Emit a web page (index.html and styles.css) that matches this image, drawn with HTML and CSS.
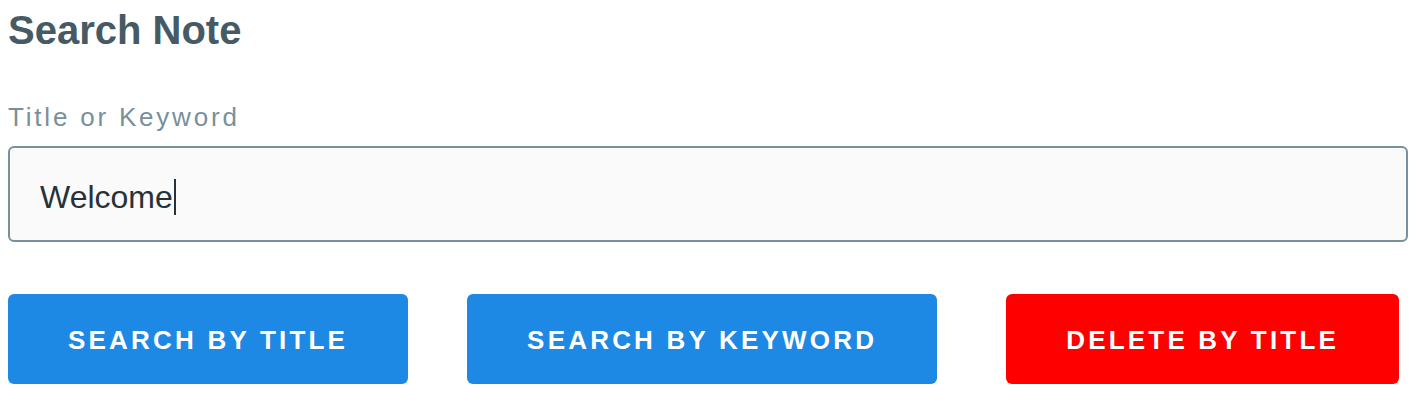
FILE: index.html
```html
<!DOCTYPE html>
<html lang="en">
<head>
<meta charset="utf-8">
<title>Search Note</title>
<link rel="stylesheet" href="styles.css">
</head>
<body>
<main class="panel">
  <h2 class="title">Search Note</h2>
  <label class="field-label" for="q">Title or Keyword</label>
  <div class="input" id="q" role="textbox"><span class="input-text">Welcome</span><span class="caret"></span></div>
  <div class="actions">
    <button class="btn btn-primary">SEARCH BY TITLE</button>
    <button class="btn btn-primary">SEARCH BY KEYWORD</button>
    <button class="btn btn-danger">DELETE BY TITLE</button>
  </div>
</main>
</body>
</html>
```
FILE: styles.css
```css
html, body {
  background: #ffffff;
}
body {
  margin: 8px;
  font-family: "Liberation Sans", Arial, sans-serif;
}
.panel {
  display: flex;
  flex-direction: column;
}
.title {
  margin: 0;
  font-size: 40px;
  line-height: 44px;
  font-weight: 700;
  color: #455a64;
}
.field-label {
  margin-top: 50px;
  font-size: 26px;
  line-height: 30px;
  letter-spacing: 2.8px;
  color: #78909c;
}
.input {
  margin-top: 14px;
  box-sizing: border-box;
  height: 96px;
  border: 2px solid #78909c;
  border-radius: 6px;
  background: #fafafa;
  padding: 6px 30px 0;
  display: flex;
  align-items: center;
  font-size: 32px;
  color: #263238;
}
.caret {
  display: inline-block;
  width: 2px;
  height: 36px;
  background: #263238;
  margin-left: 1px;
}
.actions {
  margin-top: 52px;
  display: flex;
  align-items: center;
}
.btn {
  box-sizing: border-box;
  border: none;
  border-radius: 6px;
  height: 90px;
  padding: 3px 60px 0;
  font-family: "Liberation Sans", Arial, sans-serif;
  font-size: 26px;
  font-weight: 700;
  letter-spacing: 3.2px;
  color: #ffffff;
  cursor: pointer;
}
.btn + .btn {
  margin-left: 59px;
}
.btn-primary {
  background: #1e88e5;
}
.btn-danger {
  background: #ff0000;
  margin-left: 69px !important;
}
```
